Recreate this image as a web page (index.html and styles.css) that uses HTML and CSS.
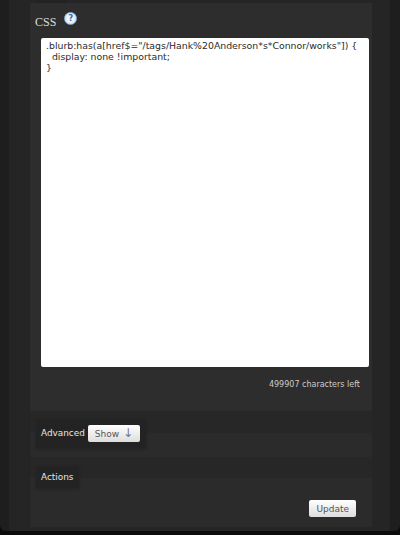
FILE: index.html
```html
<!DOCTYPE html>
<html lang="en">
<head>
    <meta charset="UTF-8">
    <meta name="viewport" content="width=device-width, initial-scale=1.0">
    <title>Edit Skin</title>
    <link rel="stylesheet" href="styles.css">
</head>
<body>
    <div id="outer">
        <div id="main">
            <div class="stub"></div>

            <!-- css field -->
            <fieldset class="css-box">
                <div class="css-label">
                    <span class="css-title">CSS</span>
                    <a class="help" href="#">?</a>
                </div>
                <div class="css-text">.blurb:has(a[href$="/tags/Hank%20Anderson*s*Connor/works"]) {
  display: none !important;
}</div>
                <p class="chars-left">499907 characters left</p>
            </fieldset>

            <!-- advanced -->
            <fieldset class="section advanced">
                <div class="legend"><span class="legend-text">Advanced</span> <button class="button show-button">Show <span class="arrow">&#8595;</span></button></div>
            </fieldset>

            <!-- actions -->
            <fieldset class="section actions">
                <div class="legend"><span>Actions</span></div>
                <div class="submit-row">
                    <button class="button">Update</button>
                </div>
            </fieldset>
        </div>
    </div>
</body>
</html>
```

FILE: styles.css
```css
html, body {
    margin: 0;
    padding: 0;
    height: 535px;
    overflow: hidden;
    background: #0c0c0c;
}
body {
    font-family: "DejaVu Sans", sans-serif;
    font-size: 8.9px;
    color: #e6e6e6;
}
#outer {
    height: 531px;
    box-sizing: border-box;
    padding: 0 10px 0 9px;
    background: #1e1e1e;
    border-radius: 0 0 6px 6px;
}
#main {
    height: 531px;
    padding: 0 18px 0 20px;
    background: #252525;
}
.stub {
    width: 30px;
    height: 3px;
    margin-left: 7px;
    background: #222;
}
fieldset {
    margin: 0;
    padding: 0;
    border: 0;
    min-width: 0;
}
.css-box {
    height: 409px;
    box-sizing: border-box;
    padding: 9px 3px 0 11px;
    background: #2d2d2d;
    border-left: 1px solid #232323;
    border-bottom: 1px solid #272727;
}
.css-label {
    display: flex;
    align-items: flex-start;
    height: 26px;
    margin-left: -6px;
}
.css-title {
    margin-top: 2px;
    font-family: "Liberation Serif", serif;
    font-size: 12px;
    line-height: 16px;
    color: #ddd;
}
.help {
    display: block;
    width: 11px;
    height: 11px;
    margin-left: 8px;
    border: 1px solid #8fb4d8;
    border-radius: 50%;
    background: radial-gradient(circle, #f2f7fc 30%, #c4daf0 100%);
    color: #3a6596;
    font-size: 8px;
    font-weight: bold;
    line-height: 11px;
    text-align: center;
    text-decoration: none;
}
.css-text {
    height: 329px;
    box-sizing: border-box;
    padding: 2px 5px;
    background: #fff;
    border-radius: 2px;
    color: #2a2a2a;
    font-size: 9.35px;
    line-height: 11px;
    white-space: pre;
    overflow: hidden;
}
.chars-left {
    margin: 13px 9px 0 0;
    text-align: right;
    font-size: 8px;
    color: #ccc;
}
.section {
    background: #2b2b2b;
    border-left: 1px solid #232323;
}
.advanced {
    height: 45px;
    padding-top: 7px;
    box-sizing: border-box;
    background: linear-gradient(to bottom, #272727 0, #272727 21px, #2b2b2b 21px);
}
.actions {
    height: 70px;
    padding-top: 9px;
    box-sizing: border-box;
    background: linear-gradient(to bottom, #272727 0, #272727 21px, #2b2b2b 21px);
}
.legend {
    display: inline-flex;
    align-items: center;
    gap: 3px;
    height: 29px;
    box-sizing: border-box;
    margin-left: 6px;
    padding: 0 6px 0 5px;
    background: #232323;
    box-shadow: 0 0 0 1px #262626, 0 1px 2px #1c1c1c;
}
.legend-text {
    margin-top: -2px;
}
.actions .legend {
    height: 22px;
}
.button {
    height: 17px;
    padding: 0 7px;
    border: 0;
    border-radius: 2px;
    background: linear-gradient(to bottom, #fff 0, #ddd 100%);
    color: #555;
    font-family: "DejaVu Sans", sans-serif;
    font-size: 9px;
}
.arrow {
    margin-left: 1px;
    font-size: 12px;
    line-height: 10px;
    color: #777;
}
.submit-row {
    display: flex;
    justify-content: flex-end;
    padding-right: 16px;
    margin-top: 12px;
}
```
